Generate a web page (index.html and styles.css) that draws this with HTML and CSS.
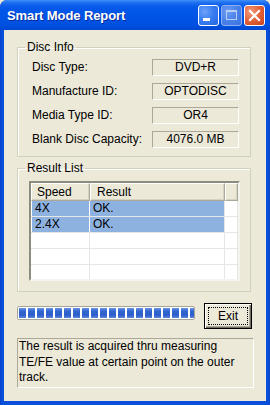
FILE: index.html
```html
<!DOCTYPE html>
<html>

<head>
    <title>Smart Mode Report</title>
    <link rel="stylesheet" href="styles.css">
</head>

<body>
    <div class="window">
        <div class="titlebar">
            <span class="title">Smart Mode Report</span>
            <div class="title-buttons">
                <span class="tbtn minimize">
                    <svg width="19" height="19" viewBox="0 0 19 19"><rect x="4" y="12" width="7" height="3" fill="#fff"/></svg>
                </span>
                <span class="tbtn maximize">
                    <svg width="19" height="19" viewBox="0 0 19 19"><rect x="4.5" y="4.5" width="10" height="9" fill="none" stroke="#b9cdf5" stroke-width="1"/><rect x="4" y="4" width="11" height="2" fill="#b9cdf5"/></svg>
                </span>
                <span class="tbtn close">
                    <svg width="19" height="19" viewBox="0 0 19 19"><path d="M5 5 L14 14 M14 5 L5 14" stroke="#fff" stroke-width="2.2" stroke-linecap="square"/></svg>
                </span>
            </div>
        </div>

        <div class="client">
            <fieldset class="group">
                <legend>Disc Info</legend>
                <div class="group-body info">
                    <div class="info-row"><span class="label">Disc Type:</span><span class="value">DVD+R</span></div>
                    <div class="info-row"><span class="label">Manufacture ID:</span><span class="value">OPTODISC</span></div>
                    <div class="info-row"><span class="label">Media Type ID:</span><span class="value">OR4</span></div>
                    <div class="info-row"><span class="label">Blank Disc Capacity:</span><span class="value">4076.0 MB</span></div>
                </div>
            </fieldset>

            <fieldset class="group results">
                <legend>Result List</legend>
                <div class="group-body list">
                    <div class="listview">
                        <div class="lv-header">
                            <span class="hcell col-speed">Speed</span>
                            <span class="hcell col-result">Result</span>
                            <span class="hcell col-rest"></span>
                        </div>
                        <div class="lv-row selected"><span class="cell col-speed">4X</span><span class="cell col-result">OK.</span><span class="cell col-rest"></span></div>
                        <div class="lv-row selected"><span class="cell col-speed">2.4X</span><span class="cell col-result">OK.</span><span class="cell col-rest"></span></div>
                        <div class="lv-row"><span class="cell col-speed"></span><span class="cell col-result"></span><span class="cell col-rest"></span></div>
                        <div class="lv-row"><span class="cell col-speed"></span><span class="cell col-result"></span><span class="cell col-rest"></span></div>
                        <div class="lv-row"><span class="cell col-speed"></span><span class="cell col-result"></span><span class="cell col-rest"></span></div>
                    </div>
                </div>
            </fieldset>

            <div class="action-row">
                <div class="progress">
                    <span></span><span></span><span></span><span></span><span></span>
                    <span></span><span></span><span></span><span></span><span></span>
                    <span></span><span></span><span></span><span></span><span></span>
                    <span></span><span></span><span></span><span></span><span></span>
                </div>
                <button class="exit"><span class="focus">Exit</span></button>
            </div>

            <div class="note">The result is acquired thru measuring TE/FE value at certain point on the outer track.</div>
        </div>
    </div>
</body>

</html>
```

FILE: styles.css
```css
body {
    margin: 0;
    padding: 0;
    font-family: "Liberation Sans", Arial, sans-serif;
    font-size: 12px;
    color: #000;
    background: #ece9d8;
}

.window {
    width: 270px;
    height: 405px;
    display: flex;
    flex-direction: column;
    background: linear-gradient(90deg, #0843c9 0, #0a4fdc 2px, #0a4fdc 268px, #0843c9 270px);
    border-radius: 7px 7px 0 0;
    overflow: hidden;
}

/* title bar */
.titlebar {
    height: 30px;
    flex: none;
    display: flex;
    align-items: center;
    padding: 0 5px 0 7px;
    box-sizing: border-box;
    background: linear-gradient(#3d8ff7 0, #1c6cf0 3px, #0659ea 7px, #0054e6 55%, #0050e0 85%, #0046d0 100%);
}

.title {
    flex: 1;
    color: #fff;
    font-weight: bold;
    font-size: 13px;
    letter-spacing: -0.1px;
    text-shadow: 1px 1px 0 #0c2a9a;
}

.title-buttons {
    display: flex;
    gap: 2px;
    margin-top: 1px;
}

.tbtn {
    width: 21px;
    height: 21px;
    box-sizing: border-box;
    border: 1px solid #fff;
    border-radius: 3px;
    display: flex;
    background: radial-gradient(circle at 30% 30%, #6ea3fb 0, #3a7ff2 45%, #2463df 100%);
}

.tbtn.maximize {
    border-color: #8fb0f0;
    background: radial-gradient(circle at 30% 30%, #6f9ef2 0, #4a82ea 50%, #3a6fe0 100%);
}

.tbtn.close {
    background: radial-gradient(circle at 30% 30%, #f29a7c 0, #e3623a 50%, #c9401a 100%);
}

/* client area */
.client {
    flex: 1;
    margin: 0 4px 4px;
    background: #ece9d8;
    padding: 10px 12px 0 13px;
    display: flex;
    flex-direction: column;
}

.group {
    margin: 0 3px 0 0;
    padding: 0;
    min-width: 0;
    border: 1px solid #d0d0bf;
    box-shadow: inset 1px 1px 0 #fff;
}

.group legend {
    margin-left: 7px;
    padding: 0 2px;
    line-height: 14px;
}

.group-body.info {
    display: flex;
    flex-direction: column;
    gap: 7px;
    padding: 5px 11px 8px 14px;
}

.info-row {
    display: flex;
    height: 17px;
}

.label {
    width: 120px;
    line-height: 17px;
}

.value {
    width: 87px;
    height: 17px;
    box-sizing: border-box;
    border-top: 1px solid #aca899;
    border-left: 1px solid #aca899;
    border-right: 1px solid #fff;
    border-bottom: 1px solid #fff;
    text-align: center;
    line-height: 15px;
}

.results {
    margin-top: 4px;
}

.group-body.list {
    padding: 6px 10px 10px 11px;
}

/* list view */
.listview {
    height: 100px;
    box-sizing: border-box;
    border-style: solid;
    border-width: 2px;
    border-color: #8d8b7e #f4f3ee #f4f3ee #8d8b7e;
    background: #fff;
    overflow: hidden;
}

.lv-header {
    display: flex;
    height: 18px;
    background: #ece9d8;
}

.hcell {
    box-sizing: border-box;
    line-height: 16px;
    border-left: 1px solid #fff;
    border-top: 1px solid #fff;
    border-right: 1px solid #aca899;
    border-bottom: 1px solid #aca899;
    box-shadow: inset -1px -1px 0 #d6d2c2;
}

.col-speed {
    width: 59px;
    padding-left: 5px;
}

.col-result {
    width: 135px;
    padding-left: 6px;
}

.col-rest {
    flex: 1;
}

.lv-row {
    display: flex;
    height: 16px;
    box-sizing: border-box;
    border-bottom: 1px solid #e6e6e6;
}

.cell {
    box-sizing: border-box;
    line-height: 15px;
    border-right: 1px solid #e6e6e6;
}

.cell.col-speed {
    padding-left: 3px;
    margin-left: 1px;
    width: 58px;
}

.cell.col-result {
    padding-left: 3px;
}

.lv-row.selected .col-speed,
.lv-row.selected .col-result {
    background: #8eb2e0;
}

.lv-row.selected .col-speed {
    border-right-color: #fff;
}

/* progress and button */
.action-row {
    display: flex;
    align-items: flex-start;
    margin-top: 11px;
}

.progress {
    width: 178px;
    height: 14px;
    margin-top: 3px;
    box-sizing: border-box;
    border: 1px solid #a7a69e;
    border-radius: 2px;
    padding: 1px 1px;
    background: #fff;
    display: flex;
    gap: 2px;
    overflow: hidden;
}

.progress span {
    flex: none;
    width: 7px;
    height: 10px;
    background: linear-gradient(#6d96e4 0, #3366d0 30%, #2d5cc8 70%, #5a86dc 100%);
}

.exit {
    margin-left: auto;
    margin-right: 2px;
    width: 48px;
    height: 26px;
    padding: 3px;
    box-sizing: border-box;
    border: 1px solid #000;
    background: #ece9d8;
    box-shadow: inset 1px 1px 0 #fff, inset -1px -1px 0 #716f64, inset -2px -2px 0 #aca899;
    font-family: "Liberation Sans", Arial, sans-serif;
    font-size: 12px;
    display: flex;
}

.exit .focus {
    flex: 1;
    border: 1px dotted #000;
    line-height: 16px;
    text-align: center;
}

.note {
    margin-top: 9px;
    height: 50px;
    box-sizing: border-box;
    border-top: 1px solid #aca899;
    border-left: 1px solid #aca899;
    border-right: 1px solid #fff;
    border-bottom: 1px solid #fff;
    line-height: 15.5px;
    padding-left: 1px;
}
```
